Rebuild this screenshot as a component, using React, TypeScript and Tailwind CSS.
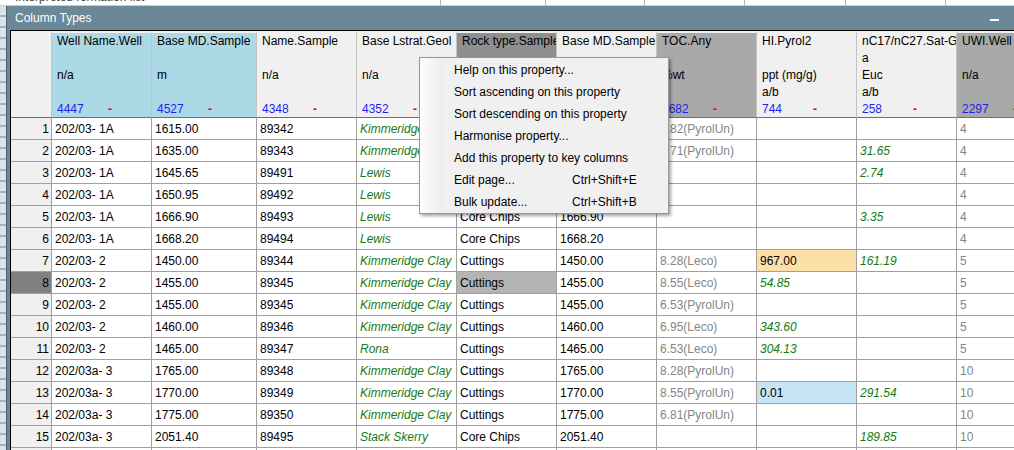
import React from 'react';

type Kind = 'plain' | 'geo' | 'muted';
type Cell = { t: string; k?: Kind; bg?: string };

type Column = {
  name: string;
  top?: string;
  unit: string;
  sub?: string;
  count: string;
  head: string;
  w: string;
};

const columns: Column[] = [
  { name: 'Well Name.Well', unit: 'n/a', count: '4447', head: 'bg-[#add8e6]', w: 'w-[100px]' },
  { name: 'Base MD.Sample', unit: 'm', count: '4527', head: 'bg-[#add8e6]', w: 'w-[105px]' },
  { name: 'Name.Sample', unit: 'n/a', count: '4348', head: 'bg-[#f0f0f0]', w: 'w-[100px]' },
  { name: 'Base Lstrat.Geol', unit: 'n/a', count: '4352', head: 'bg-[#f0f0f0]', w: 'w-[100px]' },
  { name: 'Rock type.Sample', unit: 'n/a', count: '4410', head: 'bg-[#8f8f8f]', w: 'w-[100px]' },
  { name: 'Base MD.Sample', unit: 'm', count: '4527', head: 'bg-[#f0f0f0]', w: 'w-[100px]' },
  { name: 'TOC.Any', unit: '%wt', count: '1682', head: 'bg-[#a9a9a9]', w: 'w-[100px]' },
  { name: 'HI.Pyrol2', unit: 'ppt (mg/g)', sub: 'a/b', count: '744', head: 'bg-[#f0f0f0]', w: 'w-[100px]' },
  { name: 'nC17/nC27.Sat-Gas', top: 'a', unit: 'Euc', sub: 'a/b', count: '258', head: 'bg-[#f0f0f0]', w: 'w-[100px]' },
  { name: 'UWI.Well', unit: 'n/a', count: '2297', head: 'bg-[#a9a9a9]', w: 'w-[100px]' },
];

const wells = [
  '202/03- 1A', '202/03- 1A', '202/03- 1A', '202/03- 1A', '202/03- 1A', '202/03- 1A',
  '202/03- 2', '202/03- 2', '202/03- 2', '202/03- 2', '202/03- 2',
  '202/03a- 3', '202/03a- 3', '202/03a- 3', '202/03a- 3',
];
const depths = [
  '1615.00', '1635.00', '1645.65', '1650.95', '1666.90', '1668.20', '1450.00', '1455.00',
  '1455.00', '1460.00', '1465.00', '1765.00', '1770.00', '1775.00', '2051.40',
];
const samples = [
  '89342', '89343', '89491', '89492', '89493', '89494', '89344', '89345',
  '89345', '89346', '89347', '89348', '89349', '89350', '89495',
];
const geol = [
  'Kimmeridge Clay', 'Kimmeridge Clay', 'Lewis', 'Lewis', 'Lewis', 'Lewis', 'Kimmeridge Clay',
  'Kimmeridge Clay', 'Kimmeridge Clay', 'Kimmeridge Clay', 'Rona', 'Kimmeridge Clay',
  'Kimmeridge Clay', 'Kimmeridge Clay', 'Stack Skerry',
];
const toc = [
  '8.82(PyrolUn)', '8.71(PyrolUn)', '', '', '', '', '8.28(Leco)', '8.55(Leco)', '6.53(PyrolUn)',
  '6.95(Leco)', '6.53(Leco)', '8.28(PyrolUn)', '8.55(PyrolUn)', '6.81(PyrolUn)', '',
];
const hi = ['', '', '', '', '', '', '967.00', '54.85', '', '343.60', '304.13', '', '0.01', '', ''];
const ratio = ['', '31.65', '2.74', '', '3.35', '', '161.19', '', '', '', '', '', '291.54', '', '189.85'];
const uwi = ['4', '4', '4', '4', '4', '4', '5', '5', '5', '5', '5', '10', '10', '10', '10'];

const rows: Cell[][] = wells.map((well, i) => [
  { t: well },
  { t: depths[i] },
  { t: samples[i] },
  { t: geol[i], k: 'geo' },
  { t: i < 6 || i === 14 ? 'Core Chips' : 'Cuttings', bg: i === 7 ? 'bg-[#b4b4b4]' : undefined },
  { t: depths[i] },
  { t: toc[i], k: 'muted' },
  i === 6
    ? { t: hi[i], bg: 'bg-[#fddfa8]' }
    : i === 12
      ? { t: hi[i], bg: 'bg-[#c6e4f4]' }
      : { t: hi[i], k: 'geo' },
  { t: ratio[i], k: 'geo' },
  { t: uwi[i], k: 'muted' },
]);

const tone: Record<Kind, string> = {
  plain: 'text-black',
  geo: "italic text-[#157a15] font-['Liberation_Sans_Narrow','Liberation_Sans',sans-serif]",
  muted: 'text-[#858585]',
};

const menuItems: [string, string?][] = [
  ['Help on this property...'],
  ['Sort ascending on this property'],
  ['Sort descending on this property'],
  ['Harmonise property...'],
  ['Add this property to key columns'],
  ['Edit page...', 'Ctrl+Shift+E'],
  ['Bulk update...', 'Ctrl+Shift+B'],
];

const HeaderCell = ({ col }: { col: Column }) => (
  <div
    className={`${col.w} ${col.head} h-[87px] shrink-0 overflow-hidden border-t-2 border-t-[#f0f0f0] border-r border-r-[#c4c4c4] border-b border-b-[#6e6e6e] pl-[5px] leading-[17px]`}
  >
    <div className="h-[17px] whitespace-nowrap">{col.name}</div>
    <div className="h-[17px]">{col.top}</div>
    <div className="h-[17px] whitespace-nowrap">{col.unit}</div>
    <div className="h-[17px]">{col.sub}</div>
    <div className="flex h-[16px]">
      <span className="w-[51px] text-[#1f1ff0]">{col.count}</span>
      <span className="font-bold text-[#e00000]">-</span>
    </div>
  </div>
);

const App = () => {
  return (
    <div className="relative h-[450px] w-[1014px] overflow-hidden bg-white font-['Liberation_Sans',Arial,sans-serif] text-[12px] text-black">
      {/* window behind, just the bottom edge shows */}
      <div className="flex h-[6px] overflow-hidden border-b border-[#c5ced8] bg-white">
        <div className="w-[441px] shrink-0 border-r border-[#b8b8b8] pl-[15px]">
          <div className="-mt-[12px] whitespace-nowrap text-[#444]">Interpreted formation list</div>
        </div>
        <div className="w-[105px] shrink-0 border-r border-[#b8b8b8]" />
        <div className="w-[99px] shrink-0 border-r border-[#b8b8b8]" />
        <div className="w-[100px] shrink-0 border-r border-[#b8b8b8]" />
        <div className="w-[101px] shrink-0 border-r border-[#b8b8b8]" />
        <div className="w-[100px] shrink-0 border-r border-[#b8b8b8]" />
      </div>

      <div className="flex h-[444px]">
        <div className="w-[7px] shrink-0 border-r border-[#4d5d6b] bg-[repeating-linear-gradient(180deg,#dde3ea_0px,#dde3ea_9px,#9fb4c9_9px,#9fb4c9_11px)]" />

        <div className="flex min-w-0 flex-1 flex-col bg-[#6b8898]">
          <div className="flex h-[24px] shrink-0 items-center pl-[8px] text-[12px] text-white">
            <span>Column Types</span>
            <div className="ml-auto mr-[15px] mt-[4px] h-[2px] w-[9px] bg-white" />
          </div>

          <div className="min-h-0 flex-1 pl-[3px]">
            <div className="h-full overflow-hidden border-l border-t border-black bg-white">
              <div className="flex">
                <div className="h-[87px] w-[41px] shrink-0 border-t-2 border-t-[#f0f0f0] border-r border-r-[#c4c4c4] border-b border-b-[#6e6e6e] bg-[#f0f0f0]" />
                {columns.map((col, i) => (
                  <HeaderCell key={i} col={col} />
                ))}
              </div>

              {rows.map((row, r) => (
                <div key={r} className="flex h-[22px]">
                  <div
                    className={`flex w-[41px] shrink-0 items-center justify-end border-b border-r border-[#a0a0a0] pr-[2px] ${
                      r === 7 ? 'bg-[#808080]' : 'bg-[#f0f0f0]'
                    }`}
                  >
                    {r + 1}
                  </div>
                  {row.map((cell, c) => (
                    <div
                      key={c}
                      className={`${columns[c].w} ${cell.bg ?? 'bg-white'} ${tone[cell.k ?? 'plain']} flex shrink-0 items-center overflow-hidden whitespace-nowrap border-b border-r border-[#a0a0a0] pl-[3px]`}
                    >
                      {cell.t}
                    </div>
                  ))}
                </div>
              ))}

              <div className="flex h-[22px]">
                <div className="w-[41px] shrink-0 border-r border-[#a0a0a0] bg-[#f0f0f0]" />
                {columns.map((col, i) => (
                  <div key={i} className={`${col.w} shrink-0 border-r border-[#a0a0a0]`} />
                ))}
              </div>
            </div>
          </div>
        </div>
      </div>

      {/* context menu over the grid */}
      <div className="absolute left-[419px] top-[57px] flex h-[157px] w-[250px] border border-[#979797] bg-[#f0f0f0] shadow-[2px_2px_3px_rgba(0,0,0,0.35)]">
        <div className="w-[24px] shrink-0 bg-gradient-to-r from-[#fdfdfd] to-[#ececec]" />
        <div className="flex flex-1 flex-col pl-[10px] pt-[1px]">
          {menuItems.map(([label, key], i) => (
            <div key={i} className="flex h-[22px] items-center whitespace-nowrap">
              <span className="w-[118px] shrink-0">{label}</span>
              {key && <span>{key}</span>}
            </div>
          ))}
        </div>
      </div>
    </div>
  );
};

export default App;
